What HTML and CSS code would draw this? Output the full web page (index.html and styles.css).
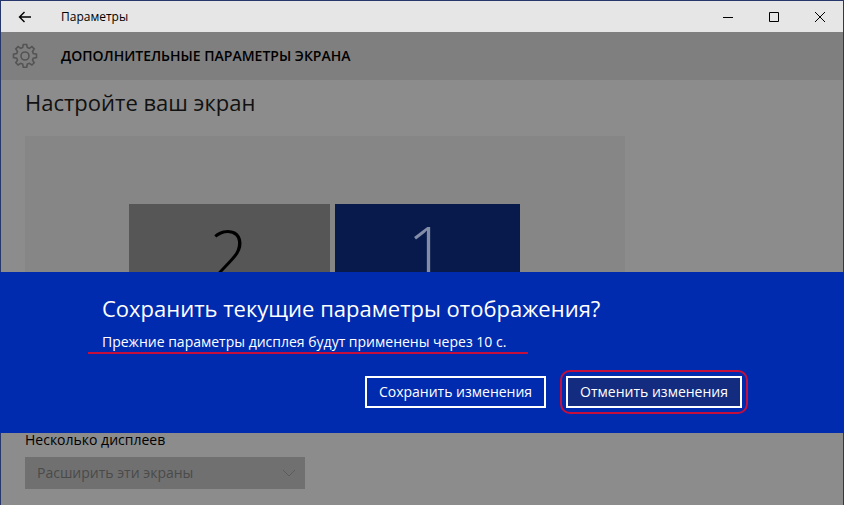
FILE: index.html
```html
<!DOCTYPE html>
<html lang="ru">

<head>
    <meta charset="UTF-8">
    <meta name="viewport" content="width=device-width, initial-scale=1.0">
    <title>Параметры</title>
    <link rel="stylesheet" href="styles.css">
</head>

<body>
    <div class="window">
        <div class="titlebar">
            <button type="button" class="back" aria-label="Назад">
                <svg width="14" height="12" viewBox="0 0 14 12"><path d="M13 6H2M6.5 1l-5 5 5 5"/></svg>
            </button>
            <span class="title">Параметры</span>
            <button type="button" class="control" aria-label="Свернуть">
                <svg width="12" height="12" viewBox="0 0 12 12"><path d="M1 6.5h10"/></svg>
            </button>
            <button type="button" class="control" aria-label="Развернуть">
                <svg width="12" height="12" viewBox="0 0 12 12"><path d="M1.5 1.5h9v9h-9z"/></svg>
            </button>
            <button type="button" class="control" aria-label="Закрыть">
                <svg width="12" height="12" viewBox="0 0 12 12"><path d="M1 1l10 10M11 1L1 11"/></svg>
            </button>
        </div>

        <div class="header">
            <svg class="gear" width="26" height="26" viewBox="0 0 26 26">
                <path d="M11.3 1.5h3.4l.6 3 2 .8 2.6-1.7 2.3 2.3-1.7 2.6.8 2 3.2.6v3.4l-3.2.6-.8 2 1.7 2.6-2.3 2.3-2.6-1.7-2 .8-.6 3.2h-3.4l-.6-3.2-2-.8-2.6 1.7-2.3-2.3 1.7-2.6-.8-2-3.2-.6v-3.4l3.2-.6.8-2-1.7-2.6 2.3-2.3 2.6 1.7 2-.8z"/>
                <circle cx="13" cy="13" r="4"/>
            </svg>
            <h1>ДОПОЛНИТЕЛЬНЫЕ ПАРАМЕТРЫ ЭКРАНА</h1>
        </div>

        <div class="content">
            <h2>Настройте ваш экран</h2>
            <div class="displays">
                <div class="display second">2</div>
                <div class="display main">1</div>
            </div>
            <label for="mode">Несколько дисплеев</label>
            <div class="select">
                <select id="mode" disabled>
                    <option>Расширить эти экраны</option>
                </select>
                <svg class="chevron" width="14" height="8" viewBox="0 0 14 8"><path d="M1 1l6 6 6-6"/></svg>
            </div>
        </div>
    </div>

    <div class="overlay">
        <div class="dialog" role="dialog" aria-labelledby="question">
            <div class="dialog-body">
                <h2 id="question">Сохранить текущие параметры отображения?</h2>
                <p class="message">Прежние параметры дисплея будут применены через 10 с.</p>
                <div class="buttons">
                    <button type="button">Сохранить изменения</button>
                    <button type="button" class="cancel">Отменить изменения</button>
                </div>
            </div>
        </div>
    </div>
</body>

</html>
```
FILE: styles.css
```css
* {
    box-sizing: border-box;
}

body {
    margin: 0;
    font-family: "Segoe UI", "Open Sans", sans-serif;
    font-size: 14px;
    line-height: 20px;
    color: #000;
    background: #8c8c8c;
}

h1,
h2,
p {
    margin: 0;
}

svg {
    display: block;
    fill: none;
    stroke: currentColor;
}

button {
    font: inherit;
    color: inherit;
    padding: 0;
}

.window {
    height: 100vh;
    overflow: hidden;
    border: 1px solid #27376b;
    border-bottom: 0;
}

.titlebar {
    display: flex;
    align-items: center;
    height: 31px;
    background: #e6e6e6;
}

.titlebar button {
    display: flex;
    align-items: center;
    justify-content: center;
    height: 31px;
    border: 0;
    background: none;
}

.back {
    width: 48px;
}

.back svg {
    stroke-width: 1.4;
}

.title {
    flex: 1;
    padding-left: 12px;
    font-size: 12px;
}

.control {
    width: 46px;
}

.header {
    display: flex;
    align-items: center;
    height: 48px;
    padding-left: 11px;
    background: #7f7f7f;
}

.gear {
    color: #545454;
    stroke-width: 1.6;
}

.header h1 {
    margin-left: 23px;
    font-size: 14px;
    font-weight: 600;
}

.content {
    padding: 8px 24px;
}

h2 {
    font-size: 22px;
    font-weight: 400;
    line-height: 28px;
}

.content h2 {
    color: #111;
}

.displays {
    display: flex;
    justify-content: center;
    gap: 5px;
    max-width: 600px;
    height: 282px;
    margin: 20px 0 12px;
    padding: 68px 2px 68px 0;
    background: #868686;
}

.display {
    font-family: "Segoe UI Light", "Open Sans", sans-serif;
    font-size: 68px;
    font-weight: 300;
    line-height: 92px;
    text-align: center;
}

.second {
    width: 201px;
    padding-top: 4px;
    background: #565656;
}

.main {
    width: 185px;
    color: #838da8;
    background: #081a4b;
}

.content label {
    display: block;
}

.select {
    position: relative;
    width: 280px;
    margin-top: 7px;
}

.select select {
    display: block;
    appearance: none;
    width: 100%;
    height: 32px;
    padding: 0 12px;
    border: 0;
    border-radius: 0;
    font: inherit;
    color: #4a4a4a;
    background: #707070;
    opacity: 1;
}

.chevron {
    position: absolute;
    top: 12px;
    right: 9px;
    color: #5c5c5c;
}

.overlay {
    position: fixed;
    inset: 0;
    display: flex;
    align-items: flex-end;
    padding-bottom: 72px;
}

.dialog {
    width: 100%;
    padding: 22px 24px 25px;
    color: #fff;
    background: #002bae;
}

.dialog-body {
    max-width: 640px;
    margin: 0 auto;
}

.message {
    position: relative;
    width: fit-content;
    margin-top: 10px;
}

/* red line under the countdown */
.message::after {
    content: "";
    position: absolute;
    left: -14px;
    right: -22px;
    bottom: -2px;
    height: 2px;
    background: #c40f3c;
}

.buttons {
    display: flex;
    justify-content: flex-end;
    gap: 20px;
    margin-top: 24px;
}

.buttons button {
    position: relative;
    height: 32px;
    padding: 0 12px;
    border: 2px solid #fff;
    background: none;
}

.buttons .cancel {
    background: #142c80;
}

/* red frame round the cancel button */
.cancel::after {
    content: "";
    position: absolute;
    inset: -8px;
    border: 2px solid #c40f3c;
    border-radius: 10px;
}
```
